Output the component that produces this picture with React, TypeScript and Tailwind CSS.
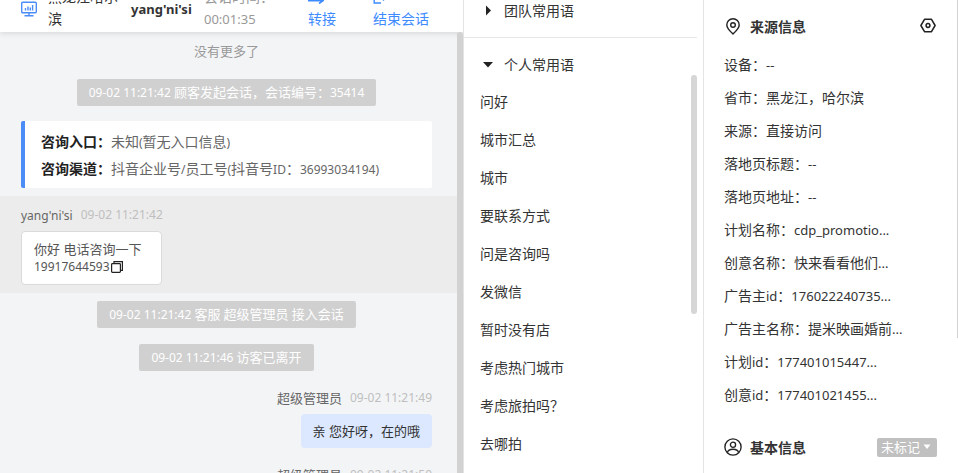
import React from "react";

const sourceInfo: [string, string][] = [
  ["设备：", "--"],
  ["省市：", "黑龙江，哈尔滨"],
  ["来源：", "直接访问"],
  ["落地页标题：", "--"],
  ["落地页地址：", "--"],
  ["计划名称：", "cdp_promotio..."],
  ["创意名称：", "快来看看他们..."],
  ["广告主id：", "176022240735..."],
  ["广告主名称：", "提米映画婚前..."],
  ["计划id：", "177401015447..."],
  ["创意id：", "177401021455..."],
];

const phrases = [
  "问好",
  "城市汇总",
  "城市",
  "要联系方式",
  "问是咨询吗",
  "发微信",
  "暂时没有店",
  "考虑热门城市",
  "考虑旅拍吗？",
  "去哪拍",
];

/* Latin runs are set one step smaller than the Chinese text around them. */
function Mixed({ text, small = false }: { text: string; small?: boolean }) {
  const runs = text.split(/([\x20-\x7e]+)/).filter(Boolean);
  return (
    <>
      {runs.map((run, i) =>
        /^[\x20-\x7e]/.test(run) ? (
          <span key={i} className={small ? "text-[12px] leading-none" : "text-[13px] leading-none"}>
            {run}
          </span>
        ) : (
          <React.Fragment key={i}>{run}</React.Fragment>
        ),
      )}
    </>
  );
}

function SystemNotice({ text }: { text: string }) {
  return (
    <div className="flex justify-center py-2 pr-[25px] pl-[21px]">
      <p className="rounded-xs bg-[#d0d0d0] px-3 text-[13px] leading-[27px] whitespace-pre text-white">
        <Mixed text={text} small />
      </p>
    </div>
  );
}

function MessageHead({ name, time }: { name: string; time: string }) {
  return (
    <div className="mb-[5px] flex items-center gap-2 leading-[22px]">
      <span className="text-[13px] text-[#666]">
        <Mixed text={name} small />
      </span>
      <time className="text-[12px] text-[#bfbfbf]">{time}</time>
    </div>
  );
}

function Chat() {
  return (
    <section className="flex min-w-0 flex-1 flex-col overflow-hidden border-r border-[#e4e4e4] bg-[#f3f4f6]">
      <header className="z-10 flex h-8 shrink-0 items-end bg-white pb-[2px] pl-[21px] leading-[22px] text-[#333] shadow-[0_2px_5px_#0000001a]">
        <svg className="mb-[13px] h-4 w-4 shrink-0" viewBox="0 0 16 16" fill="none" stroke="#4b8cf7" strokeWidth="1.4">
          <rect x="0.7" y="1.2" width="14.6" height="10.6" rx="1" />
          <path d="M4.5 9.5V7M7 9.5V5.5M9.3 9.5V6.5M11.6 9.5V4M8 12v2.5M3.5 14.8h9" />
        </svg>
        <p className="ml-[11px] w-[75px] shrink-0 pr-1">黑龙江哈尔滨</p>
        <strong className="mb-[10px] ml-2 w-[73px] shrink-0 text-[13px]">yang'ni'si</strong>
        <p className="w-[104px] shrink-0 text-[#999]">
          会话时间：
          <br />
          <span className="text-[13px] leading-none">00:01:35</span>
        </p>
        <button className="w-[65px] shrink-0 text-left text-[#3d8bff]">
          <svg className="mb-1 h-4 w-4" viewBox="0 0 16 16" fill="none" stroke="currentColor" strokeWidth="1.6">
            <path d="M1 5h14M5 1L1 5M0 12.8h15l-4 2.700" />
          </svg>
          转接
        </button>
        <button className="shrink-0 text-left text-[#3d8bff]">
          <svg className="mb-1 h-4 w-4" viewBox="0 0 16 16" fill="none" stroke="currentColor" strokeWidth="1.4">
            <path d="M8 15H1.2V2H8M10 12.5l4-4-4-4M5 8.5h9" />
          </svg>
          结束会话
        </button>
      </header>
      <div className="flex min-h-0 flex-1">
        <div className="min-w-0 flex-1 overflow-hidden">
          <p className="pr-[25px] pl-[21px] text-center text-[13px] leading-[39px] text-[#999]">没有更多了</p>
          <SystemNotice text="09-02 11:21:42 顾客发起会话，会话编号：35414" />
          <dl className="mt-[7px] mr-[25px] mb-2 ml-[21px] rounded-xs border-l-4 border-[#4b8cf7] bg-white pt-[7px] pb-[6px] pl-4 leading-[27px] text-[#666]">
            <div className="flex">
              <dt className="font-bold text-[#222]">咨询入口：</dt>
              <dd>
                <Mixed text="未知(暂无入口信息)" small />
              </dd>
            </div>
            <div className="flex">
              <dt className="font-bold text-[#222]">咨询渠道：</dt>
              <dd>
                <Mixed text="抖音企业号/员工号(抖音号ID：36993034194)" small />
              </dd>
            </div>
          </dl>
          <article className="bg-[#ececec] py-2 pr-[25px] pl-[21px]">
            <MessageHead name="yang'ni'si" time="09-02 11:21:42" />
            <div className="w-[141px] rounded-sm border border-[#dadada] bg-white px-3 py-2 text-[13px] leading-[18px] text-[#555]">
              <p>你好 电话咨询一下</p>
              <p className="flex items-center">
                <span className="text-[12px]">19917644593</span>
                <button aria-label="复制">
                  <svg className="ml-px h-3 w-3" viewBox="0 0 12 12" fill="none" stroke="#222" strokeWidth="1.2">
                    <rect x="0.6" y="2.6" width="8.8" height="8.8" rx="0.8" />
                    <path d="M3 2.6V0.6h8.4v8.8h-2" />
                  </svg>
                </button>
              </p>
            </div>
          </article>
          <SystemNotice text="09-02 11:21:42 客服 超级管理员 接入会话" />
          <SystemNotice text="09-02 11:21:46 访客已离开" />
          <article className="flex flex-col items-end py-2 pr-[25px] pl-[21px]">
            <MessageHead name="超级管理员" time="09-02 11:21:49" />
            <p className="rounded-sm bg-[#dce8ff] px-3 py-2 text-[13px] leading-[18px] text-[#333]">亲 您好呀，在的哦</p>
          </article>
          <article className="flex flex-col items-end py-2 pr-[25px] pl-[21px]">
            <MessageHead name="超级管理员" time="09-02 11:21:50" />
          </article>
        </div>
        <div className="z-10 w-[6px] rounded-t-full bg-[#d2d2d2]" />
      </div>
    </section>
  );
}

function Phrases() {
  return (
    <section className="flex w-60 shrink-0 flex-col border-r border-[#e4e4e4] bg-white pr-[6px]">
      <div className="flex h-[38px] shrink-0 items-end border-b border-[#e8e8e8] pb-4 pl-4">
        <button className="flex items-center leading-5">
          <svg className="mr-2 h-4 w-4" viewBox="0 0 16 16" fill="#222">
            <path d="M6 2.5L11 7.5L6 12.5z" />
          </svg>
          团队常用语
        </button>
      </div>
      <button className="flex items-center pt-[17px] pl-4 leading-5">
        <svg className="mr-2 h-4 w-4" viewBox="0 0 16 16" fill="#222">
          <path d="M3 5H13L8 10.5z" />
        </svg>
        个人常用语
      </button>
      <div className="flex min-h-0 flex-1">
        <ul className="flex-1 overflow-hidden pt-2 pl-4">
          {phrases.map((p) => (
            <li key={p}>
              <button className="w-full text-left leading-[38px]">{p}</button>
            </li>
          ))}
        </ul>
        <div className="h-[239px] w-[6px] rounded-full bg-[#d6d6d6]" />
      </div>
    </section>
  );
}

function Visitor() {
  return (
    <aside className="flex w-[254px] shrink-0 bg-white">
      <div className="flex-1 overflow-hidden px-5">
        <div className="flex h-12 items-center pt-1">
          <svg className="mr-2 h-[17px] w-[18px]" viewBox="0 0 16 17" fill="none" stroke="#222" strokeWidth="1.4">
            <path d="M8 16C5 13.2 1.800 10.4 1.800 7a6.200 6.200 0 0 1 12.400 0c0 3.400-3.200 6.200-6.200 9z" />
            <circle cx="8" cy="7" r="2.300" />
          </svg>
          <h2 className="flex-1 font-bold">来源信息</h2>
          <button aria-label="设置" className="mr-px">
            <svg className="h-4 w-4" viewBox="0 0 16 16" fill="none" stroke="#222" strokeWidth="1.5">
              <path d="M4.500 1.300h7l3.600 6.200-3.600 6.200h-7L0.900 7.500z" strokeLinejoin="round" />
              <circle cx="8" cy="7.500" r="1.900" />
            </svg>
          </button>
        </div>
        <dl>
          {sourceInfo.map(([k, v]) => (
            <div key={k} className="flex leading-[33px]">
              <dt>
                <Mixed text={k} />
              </dt>
              <dd>
                <Mixed text={v} />
              </dd>
            </div>
          ))}
        </dl>
        <div className="mt-[26px] flex h-5 items-center">
          <svg className="mr-2 h-[18px] w-[18px]" viewBox="0 0 16 16" fill="none" stroke="#222" strokeWidth="1.2">
            <circle cx="8" cy="8" r="7.200" />
            <circle cx="8" cy="6" r="2.300" />
            <path d="M3 13c0.500-2.300 2.500-3 5-3s4.500 0.700 5 3" />
          </svg>
          <h2 className="flex-1 font-bold">基本信息</h2>
          <label className="flex h-[19px] items-center rounded-xs bg-[#c0c0c0] pr-[6px] pl-1 text-[13px] text-white">
            <select aria-label="标记" className="appearance-none bg-transparent leading-[19px] outline-none">
              <option>未标记</option>
            </select>
            <svg className="ml-[2px] h-2 w-2" viewBox="0 0 8 8" fill="currentColor">
              <path d="M0.500 1.500h7L4 6z" />
            </svg>
          </label>
        </div>
      </div>
      <div className="h-[338px] w-px bg-[#d2d2d2]" />
    </aside>
  );
}

export default function App() {
  return (
    <main className="flex h-screen overflow-hidden bg-white font-['Noto_Sans','Noto_Sans_CJK_SC',sans-serif] text-[14px] text-[#333]">
      <Chat />
      <Phrases />
      <Visitor />
    </main>
  );
}
